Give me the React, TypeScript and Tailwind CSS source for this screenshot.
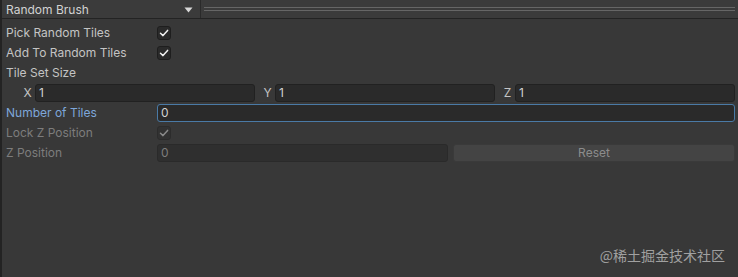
import React from "react";

const font = { fontFamily: "Inter, 'Noto Sans', sans-serif" };

function Check({ disabled }: { disabled?: boolean }) {
  return (
    <div
      className={
        "w-[14px] h-[14px] rounded-[3px] border flex items-center justify-center " +
        (disabled ? "bg-[#323232] border-[#2c2c2c]" : "bg-[#2a2a2a] border-[#1e1e1e]")
      }
    >
      <svg width="10" height="10" viewBox="0 0 10 10">
        <path
          d="M1.5 5.3 L4 7.6 L8.6 2.4"
          fill="none"
          stroke={disabled ? "#8a8a8a" : "#f0f0f0"}
          strokeWidth="1.5"
          strokeLinecap="round"
          strokeLinejoin="round"
        />
      </svg>
    </div>
  );
}

function Row({ children }: { children: React.ReactNode }) {
  return <div className="h-[20px] flex items-center pr-[3px]">{children}</div>;
}

function Label({ text, cls }: { text: string; cls?: string }) {
  return <div className={"w-[155px] pl-[4px] shrink-0 text-[12px] " + (cls ?? "text-[#c4c4c4]")}>{text}</div>;
}

export default function App() {
  return (
    <div
      className="relative w-[738px] h-[277px] bg-[#383838] border-l-2 border-[#232323] overflow-hidden"
      style={font}
    >
      <div className="h-[19px] flex border-b border-[#232323] bg-[#3b3b3b]">
        <div className="w-[199px] flex items-center justify-between pl-[4px] pr-[7px] pt-px border-r border-[#2a2a2a]">
          <span className="text-[12px] text-[#d2d2d2]">Random Brush</span>
          <svg width="9" height="6" viewBox="0 0 9 6">
            <path d="M0.5 0.5 L8.5 0.5 L4.5 5.5 Z" fill="#d8d8d8" />
          </svg>
        </div>
        <div className="flex-1 flex flex-col justify-center gap-[2px] pl-[3px] pr-[3px]">
          <div className="h-px bg-[#666666]" />
          <div className="h-px bg-[#666666]" />
        </div>
      </div>
      <div className="pt-[4px]">
        <Row>
          <Label text="Pick Random Tiles" />
          <Check />
        </Row>
        <Row>
          <Label text="Add To Random Tiles" />
          <Check />
        </Row>
        <Row>
          <Label text="Tile Set Size" />
        </Row>
        <Row>
          <div className="flex-1 flex gap-[5px] pl-[18px] h-[18px]">
            {["X", "Y", "Z"].map((l) => (
              <div key={l} className="flex-1 flex items-center">
                <div className="w-[15px] text-center text-[12px] text-[#c4c4c4]">{l}</div>
                <div className="flex-1 h-[18px] bg-[#2a2a2a] border border-[#212121] rounded-[3px] flex items-center pl-[3px] text-[12px] text-[#d2d2d2]">
                  1
                </div>
              </div>
            ))}
          </div>
        </Row>
        <Row>
          <Label text="Number of Tiles" cls="text-[#7ea7da]" />
          <div className="flex-1 h-[18px] bg-[#2a2a2a] border border-[#4a7aa6] rounded-[3px] flex items-center pl-[3px] text-[12px] text-[#d2d2d2]">
            0
          </div>
        </Row>
        <Row>
          <Label text="Lock Z Position" cls="text-[#7d7d7d]" />
          <Check disabled />
        </Row>
        <Row>
          <Label text="Z Position" cls="text-[#7d7d7d]" />
          <div className="w-[291px] h-[18px] bg-[#2f2f2f] border border-[#2a2a2a] rounded-[3px] flex items-center pl-[3px] text-[12px] text-[#7d7d7d]">
            0
          </div>
          <div className="flex-1 ml-[5px] h-[18px] bg-[#444444] border border-[#3a3a3a] rounded-[3px] flex items-center justify-center text-[12px] text-[#8c8c8c]">
            Reset
          </div>
        </Row>
      </div>
      <div
        className="absolute right-[13px] bottom-[11px] text-[14px] text-[#a0a0a0]"
        style={{ fontFamily: "'Noto Sans CJK SC', sans-serif" }}
      >
        @稀土掘金技术社区
      </div>
    </div>
  );
}
